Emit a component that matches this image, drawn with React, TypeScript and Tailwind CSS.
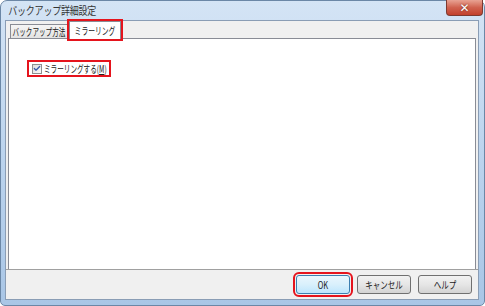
import type { ReactNode } from 'react';
import { Check } from 'lucide-react';

const buttons = [
  { label: 'OK', primary: true },
  { label: 'キャンセル', primary: false },
  { label: 'ヘルプ', primary: false },
];

// Meiryo UI is narrower than Noto, so squeeze the label around its centre
function Squeeze({ children, scale }: { children: ReactNode; scale: string }) {
  return (
    <span className="inline-flex w-0 justify-center">
      <span className={`shrink-0 whitespace-nowrap text-[10px] leading-none ${scale}`}>{children}</span>
    </span>
  );
}

export default function App() {
  return (
    <div className="w-[485px] h-[306px] bg-white font-['Noto_Sans_CJK_JP',sans-serif] text-[#1a1a1a]">
      {/* Window frame */}
      <div className="w-full h-full flex flex-col rounded-t-[7px] rounded-b-[5px] border border-[#6b87a6] bg-gradient-to-b from-[#d4e4f5] via-[#bcd4ee] to-[#a9c6e6] pl-[4px] pr-[5px] pb-[5px]">
        {/* Title bar */}
        <div className="h-[19px] flex items-start justify-between">
          <span className="inline-block origin-left scale-x-[0.82] pl-[4px] pt-[2px] text-[11px] leading-[14px] tracking-[-0.3px] text-[#333]">
            バックアップ詳細設定
          </span>
          <div className="-mt-px -mr-[4px] w-[37px] h-[16px] flex items-center justify-center rounded-b-[4px] border border-t-0 border-[#7d3a30] bg-gradient-to-b from-[#e8a293] via-[#d0624f] to-[#c2402c]">
            <span className="text-white text-[12px] leading-none font-bold font-['DejaVu_Sans',sans-serif] [text-shadow:0_0_2px_#5a1a12]">
              ✕
            </span>
          </div>
        </div>

        {/* Client area */}
        <div className="flex-1 flex flex-col border border-[#8a9db5] bg-[#f0f0f0]">
          <div className="flex-1 flex flex-col px-[2px]">
            {/* Tabs */}
            <div className="h-[17px] flex items-end pl-[2px]">
              <div className="h-[14px] w-[58px] flex items-center justify-center border border-b-0 border-[#898c95] bg-gradient-to-b from-[#f5f5f5] to-[#e3e3e3]">
                <Squeeze scale="scale-x-[0.66]">バックアップ方法</Squeeze>
              </div>
              <div className="relative z-10 -mb-px ml-px h-[18px] w-[52px] flex items-center justify-center border border-b-0 border-[#898c95] bg-white outline-2 outline-[#e5141d]">
                <Squeeze scale="scale-x-[0.68]">ミラーリング</Squeeze>
              </div>
            </div>

            {/* Tab panel */}
            <div className="flex-1 border border-b-0 border-[#898c95] bg-white pl-[18px] pt-[21px]">
              <div className="w-[84px] flex items-center gap-[2px] h-[17px] border-2 border-[#e5141d] pl-[3px]">
                <span className="shrink-0 w-[10px] h-[10px] flex items-center justify-center border border-[#8e8f8f] bg-gradient-to-br from-[#dcdcdc] to-[#fbfbfb]">
                  <Check className="w-[9px] h-[9px] text-[#3a5ca8]" strokeWidth={4} />
                </span>
                <span className="inline-block shrink-0 whitespace-nowrap origin-left scale-x-[0.66] text-[10px] leading-none text-[#222]">
                  ミラーリングする(<span className="underline">M</span>)
                </span>
              </div>
            </div>
          </div>

          {/* Button bar */}
          <div className="h-[30px] flex justify-end items-start gap-[7px] border-t border-[#a0a0a0] pt-[5px] pr-[6px]">
            {buttons.map((b) => (
              <div
                key={b.label}
                className={
                  b.primary
                    ? 'w-[54px] h-[19px] flex items-center justify-center rounded-[3px] border border-[#3c7fb1] bg-gradient-to-b from-[#eaf6fd] via-[#d9f0fc] to-[#bee6fd] outline-2 outline-[#e5141d] outline-offset-[1px]'
                    : 'w-[54px] h-[19px] flex items-center justify-center rounded-[3px] border border-[#707070] bg-gradient-to-b from-[#f2f2f2] via-[#e6e6e6] to-[#d3d3d3]'
                }
              >
                <Squeeze scale="scale-x-[0.75]">{b.label}</Squeeze>
              </div>
            ))}
          </div>
        </div>
      </div>
    </div>
  );
}
